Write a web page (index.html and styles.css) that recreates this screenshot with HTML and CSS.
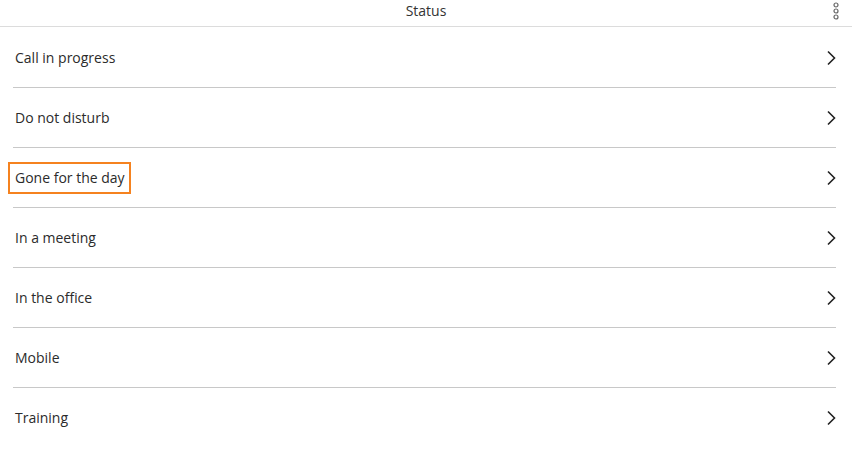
FILE: index.html
```html
<!DOCTYPE html>
<html lang="en">
<head>
<meta charset="utf-8">
<title>Status</title>
<link rel="stylesheet" href="styles.css">
</head>
<body>
<header class="topbar">
  <span class="topbar-title">Status</span>
  <button class="more" aria-label="More options">
    <svg width="8" height="18" viewBox="0 0 8 18">
      <circle cx="4" cy="3" r="2" fill="none" stroke="#666" stroke-width="1.2"/>
      <circle cx="4" cy="9" r="2" fill="none" stroke="#666" stroke-width="1.2"/>
      <circle cx="4" cy="15" r="2" fill="none" stroke="#666" stroke-width="1.2"/>
    </svg>
  </button>
</header>
<ul class="status-list">
  <li class="status-row"><span class="label">Call in progress</span><svg class="chevron" viewBox="0 0 10 16"><path d="M2 1.5 L8.5 8 L2 14.5" /></svg></li>
  <li class="status-row"><span class="label">Do not disturb</span><svg class="chevron" viewBox="0 0 10 16"><path d="M2 1.5 L8.5 8 L2 14.5" /></svg></li>
  <li class="status-row"><span class="label focused">Gone for the day</span><svg class="chevron" viewBox="0 0 10 16"><path d="M2 1.5 L8.5 8 L2 14.5" /></svg></li>
  <li class="status-row"><span class="label">In a meeting</span><svg class="chevron" viewBox="0 0 10 16"><path d="M2 1.5 L8.5 8 L2 14.5" /></svg></li>
  <li class="status-row"><span class="label">In the office</span><svg class="chevron" viewBox="0 0 10 16"><path d="M2 1.5 L8.5 8 L2 14.5" /></svg></li>
  <li class="status-row"><span class="label">Mobile</span><svg class="chevron" viewBox="0 0 10 16"><path d="M2 1.5 L8.5 8 L2 14.5" /></svg></li>
  <li class="status-row"><span class="label">Training</span><svg class="chevron" viewBox="0 0 10 16"><path d="M2 1.5 L8.5 8 L2 14.5" /></svg></li>
</ul>
</body>
</html>
```

FILE: styles.css
```css
html, body {
  margin: 0;
  padding: 0;
  background: #ffffff;
  font-family: "Open Sans", "Noto Sans", sans-serif;
  color: #2b2b2b;
}

.topbar {
  position: relative;
  height: 26px;
  border-bottom: 1px solid #dcdcdc;
  display: flex;
  align-items: flex-start;
  justify-content: center;
}

.topbar-title {
  font-size: 14px;
  line-height: 18px;
  padding-top: 2px;
  color: #333;
}

.more {
  position: absolute;
  right: 12px;
  top: 2px;
  width: 8px;
  height: 18px;
  padding: 0;
  border: 0;
  background: none;
  display: flex;
}

.status-list {
  list-style: none;
  margin: 0;
  padding: 1px 0 0;
}

.status-row {
  height: 59px;
  margin: 0 16px 0 13px;
  border-bottom: 1px solid #c8c8c8;
  display: flex;
  align-items: center;
  justify-content: space-between;
}

.status-row:last-child {
  border-bottom-color: transparent;
}

.label {
  margin-left: -5px;
  padding: 5px 4px 5px 5px;
  border: 2px solid transparent;
  font-size: 14px;
  line-height: 18px;
}

.label.focused {
  border-color: #f5821f;
}

.chevron {
  width: 10px;
  height: 16px;
  fill: none;
  stroke: #222;
  stroke-width: 1.6;
}
```
